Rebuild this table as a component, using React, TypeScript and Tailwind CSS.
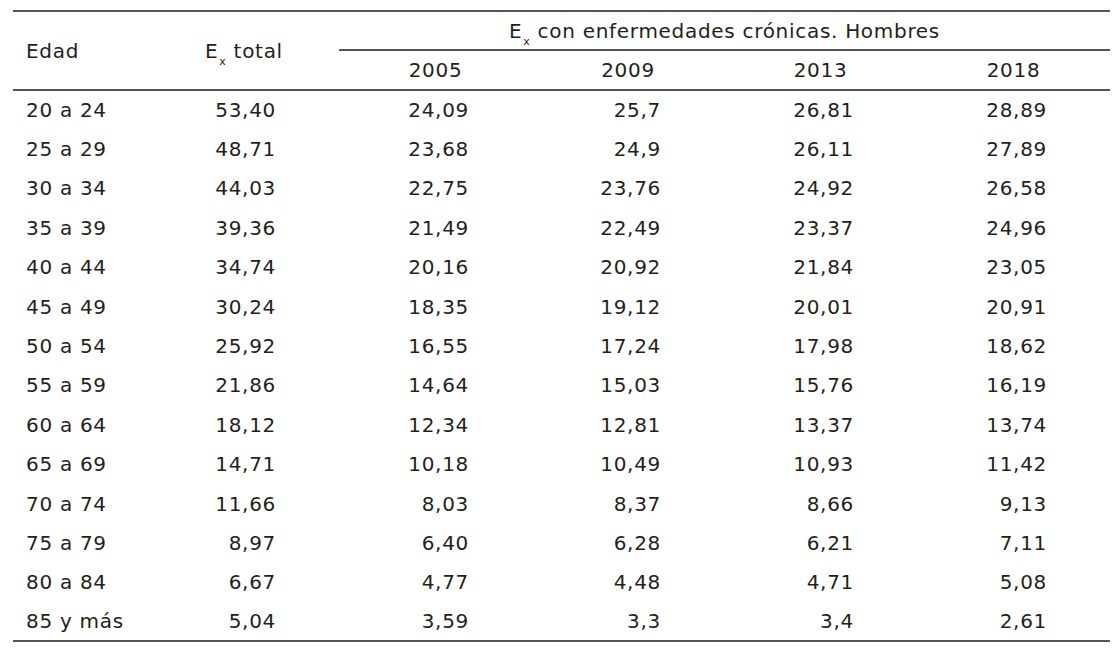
export default function App() {
  const rows: string[][] = [
    ["20 a 24", "53,40", "24,09", "25,7", "26,81", "28,89"],
    ["25 a 29", "48,71", "23,68", "24,9", "26,11", "27,89"],
    ["30 a 34", "44,03", "22,75", "23,76", "24,92", "26,58"],
    ["35 a 39", "39,36", "21,49", "22,49", "23,37", "24,96"],
    ["40 a 44", "34,74", "20,16", "20,92", "21,84", "23,05"],
    ["45 a 49", "30,24", "18,35", "19,12", "20,01", "20,91"],
    ["50 a 54", "25,92", "16,55", "17,24", "17,98", "18,62"],
    ["55 a 59", "21,86", "14,64", "15,03", "15,76", "16,19"],
    ["60 a 64", "18,12", "12,34", "12,81", "13,37", "13,74"],
    ["65 a 69", "14,71", "10,18", "10,49", "10,93", "11,42"],
    ["70 a 74", "11,66", "8,03", "8,37", "8,66", "9,13"],
    ["75 a 79", "8,97", "6,40", "6,28", "6,21", "7,11"],
    ["80 a 84", "6,67", "4,77", "4,48", "4,71", "5,08"],
    ["85 y más", "5,04", "3,59", "3,3", "3,4", "2,61"],
  ]
  const years = ["2005", "2009", "2013", "2018"]

  return (
    <div className="min-h-screen bg-white pt-[10px] pl-[13px] font-['DejaVu_Sans',Verdana,sans-serif] text-[20px] tracking-[0.7px] text-[#231f20]">
      <table className="w-[1097px] table-fixed border-collapse leading-none">
        <colgroup>
          <col className="w-[177px]" />
          <col className="w-[149px]" />
          <col className="w-[193px]" />
          <col className="w-[192px]" />
          <col className="w-[193px]" />
          <col className="w-[193px]" />
        </colgroup>
        <thead>
          <tr className="h-[39px] border-t-2 border-[#555]">
            <th rowSpan={2} className="pl-[13px] text-left align-middle font-normal border-b-2 border-[#555]">
              Edad
            </th>
            <th rowSpan={2} className="pl-[15px] text-left align-middle font-normal border-b-2 border-[#555]">
              E<sub className="text-[11px] align-[-5px] ml-[1px]">x</sub> total
            </th>
            <th colSpan={4} className="text-center align-middle font-normal border-b-2 border-[#555]">
              E<sub className="text-[11px] align-[-5px] ml-[1px]">x</sub> con enfermedades crónicas. Hombres
            </th>
          </tr>
          <tr className="h-[40px] border-b-2 border-[#555]">
            {years.map((y) => (
              <th key={y} className="text-center align-middle font-normal">
                {y}
              </th>
            ))}
          </tr>
        </thead>
        <tbody className="border-b-2 border-[#555]">
          {rows.map((r) => (
            <tr key={r[0]} className="h-[39.4px]">
              <td className="pl-[13px] text-left align-middle">{r[0]}</td>
              {r.slice(1).map((v, i) => (
                <td key={i} className="pr-[63px] text-right align-middle">
                  {v}
                </td>
              ))}
            </tr>
          ))}
        </tbody>
      </table>
    </div>
  )
}
